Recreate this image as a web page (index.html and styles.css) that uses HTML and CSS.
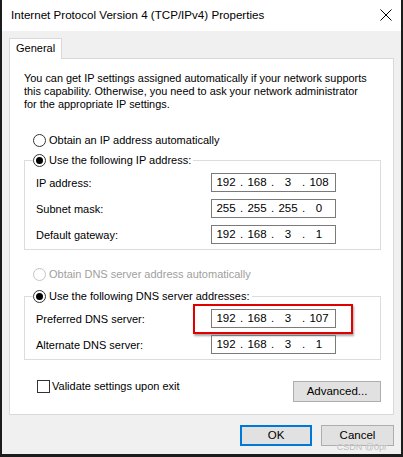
FILE: index.html
```html
<!DOCTYPE html>
<html>
<head>
<meta charset="utf-8">
<link rel="stylesheet" href="styles.css">
</head>
<body>
<div class="window">
  <div class="titlebar">
    <span class="title">Internet Protocol Version 4 (TCP/IPv4) Properties</span>
    <svg class="close" width="12" height="12" viewBox="0 0 12 12"><path d="M0.5 0.5 L11.5 11.5 M11.5 0.5 L0.5 11.5" stroke="#000" stroke-width="1" fill="none"/></svg>
  </div>
  <div class="client">
    <div class="tabs"><div class="tab">General</div></div>
    <div class="panel">
      <p class="desc"><span class="line">You can get IP settings assigned automatically if your network supports</span><span class="line">this capability. Otherwise, you need to ask your network administrator</span><span class="line">for the appropriate IP settings.</span></p>

      <div class="radio-row first"><span class="radio"></span><span>Obtain an IP address automatically</span></div>
      <fieldset class="group">
        <legend><span class="radio checked"></span><span>Use the following IP address:</span></legend>
        <div class="field"><span class="label">IP address:</span>
          <div class="ip"><span class="oct">192</span><span class="dot">.</span><span class="oct">168</span><span class="dot">.</span><span class="oct">3</span><span class="dot">.</span><span class="oct">108</span></div></div>
        <div class="field"><span class="label">Subnet mask:</span>
          <div class="ip"><span class="oct">255</span><span class="dot">.</span><span class="oct">255</span><span class="dot">.</span><span class="oct">255</span><span class="dot">.</span><span class="oct">0</span></div></div>
        <div class="field"><span class="label">Default gateway:</span>
          <div class="ip"><span class="oct">192</span><span class="dot">.</span><span class="oct">168</span><span class="dot">.</span><span class="oct">3</span><span class="dot">.</span><span class="oct">1</span></div></div>
      </fieldset>

      <div class="radio-row disabled"><span class="radio"></span><span>Obtain DNS server address automatically</span></div>
      <fieldset class="group dns">
        <legend><span class="radio checked"></span><span>Use the following DNS server addresses:</span></legend>
        <div class="field"><span class="label">Preferred DNS server:</span>
          <div class="ip highlight"><span class="oct">192</span><span class="dot">.</span><span class="oct">168</span><span class="dot">.</span><span class="oct">3</span><span class="dot">.</span><span class="oct">107</span></div></div>
        <div class="field"><span class="label">Alternate DNS server:</span>
          <div class="ip"><span class="oct">192</span><span class="dot">.</span><span class="oct">168</span><span class="dot">.</span><span class="oct">3</span><span class="dot">.</span><span class="oct">1</span></div></div>
      </fieldset>

      <div class="bottom-row">
        <div class="check-row"><span class="checkbox"></span><span>Validate settings upon exit</span></div>
        <button class="btn advanced">Advanced...</button>
      </div>
    </div>
    <div class="buttons">
      <button class="btn ok">OK</button>
      <button class="btn cancel">Cancel</button>
    </div>
    <span class="watermark">CSDN @0pr</span>
  </div>
</div>
</body>
</html>
```
FILE: styles.css
```css
* { box-sizing: border-box; }
html, body { margin: 0; padding: 0; }
body {
  width: 403px;
  height: 457px;
  overflow: hidden;
  font-family: "Liberation Sans", Arial, sans-serif;
  font-size: 11px;
  color: #000;
  background: #fff;
}
.window {
  width: 403px;
  height: 457px;
  border-left: 2px solid #1c1c1c;
  border-right: 2px solid #1c1c1c;
  border-bottom: 3px solid #1c1c1c;
  display: flex;
  flex-direction: column;
}
.titlebar {
  height: 31px;
  background: #fff;
  display: flex;
  align-items: center;
  padding-left: 9px;
  padding-right: 9px;
  justify-content: space-between;
}
.title { font-size: 11.6px; line-height: 14px; margin-top: -1px; }
.close { margin-top: -1px; }
.client {
  flex: 1;
  background: #f0f0f0;
  padding: 7px 7px 0 7px;
  position: relative;
}
.tabs { display: flex; height: 20px; }
.tab {
  width: 53px;
  height: 21px;
  background: #fff;
  border: 1px solid #d9d9d9;
  border-bottom: none;
  padding-left: 6px;
  line-height: 19px;
  position: relative;
  z-index: 1;
}
.panel {
  width: 385px;
  height: 357px;
  background: #fff;
  border: 1px solid #d9d9d9;
  padding: 13px 0 0 14px;
}
.desc { margin: 0; white-space: nowrap; display: flex; flex-direction: column; font-size: 10.9px; }
.desc .line { height: 13px; line-height: 13px; }
.radio-row, legend, .check-row {
  display: flex;
  align-items: center;
  height: 16px;
  line-height: 16px;
}
.radio-row { margin-left: 9px; }
.radio-row.first { margin-top: 21px; margin-bottom: 4px; }
.radio {
  width: 13px; height: 13px;
  border: 1px solid #333;
  border-radius: 50%;
  background: #fff;
  margin-right: 3px;
  position: relative;
  flex: none;
}
.radio.checked::after {
  content: "";
  position: absolute;
  left: 2px; top: 2px;
  width: 7px; height: 7px;
  border-radius: 50%;
  background: #000;
}
.disabled { color: #a0a0a0; }
.disabled .radio { border-color: #c4c4c4; }
.group {
  margin: 0;
  width: 357px;
  border: 1px solid #dcdcdc;
  padding: 5px 0 5px 11px;
  min-width: 0;
}
legend { padding: 0 2px 0 0; margin-left: -3px; }
.field {
  display: flex;
  align-items: center;
  height: 19px;
  margin-bottom: 7px;
}
.field:last-child { margin-bottom: 0; }
.label { width: 175px; }
.ip {
  width: 125px;
  height: 19px;
  border: 1px solid #7a7a7a;
  display: flex;
  align-items: center;
  padding-left: 2px;
  line-height: 17px;
  position: relative;
  font-size: 11.5px;
}
.oct { width: 24px; text-align: center; }
.dot { width: 7px; text-align: center; }
.highlight::before {
  content: "";
  position: absolute;
  left: -19px; top: -6px;
  width: 156px; height: 26px;
  border: 2px solid #e00000;
  box-shadow: 1px 2px 2px rgba(0,0,0,0.35);
}
.radio-row.disabled { margin-top: 16px; margin-bottom: 6px; }
.bottom-row {
  display: flex;
  justify-content: space-between;
  align-items: flex-start;
  margin-top: 18px;
  width: 357px;
}
.check-row { margin-left: 13px; }
.checkbox {
  width: 13px; height: 13px;
  border: 1px solid #333;
  background: #fff;
  margin-right: 2px;
}
.btn {
  font-family: inherit;
  font-size: 11.5px;
  color: #000;
  background: #e1e1e1;
  border: 1px solid #adadad;
  height: 21px;
  padding: 0;
  line-height: 17px;
}
.advanced { width: 88px; margin-top: 3px; }
.buttons {
  display: flex;
  justify-content: flex-end;
  gap: 9px;
  margin-top: 10px;
}
.ok { width: 72px; border: 2px solid #0078d7; }
.cancel { width: 73px; }
.watermark {
  position: absolute;
  right: 14px;
  bottom: 2px;
  font-size: 9px;
  color: #b9b9b9;
  text-shadow: 0 0 1px #fff;
}
```
